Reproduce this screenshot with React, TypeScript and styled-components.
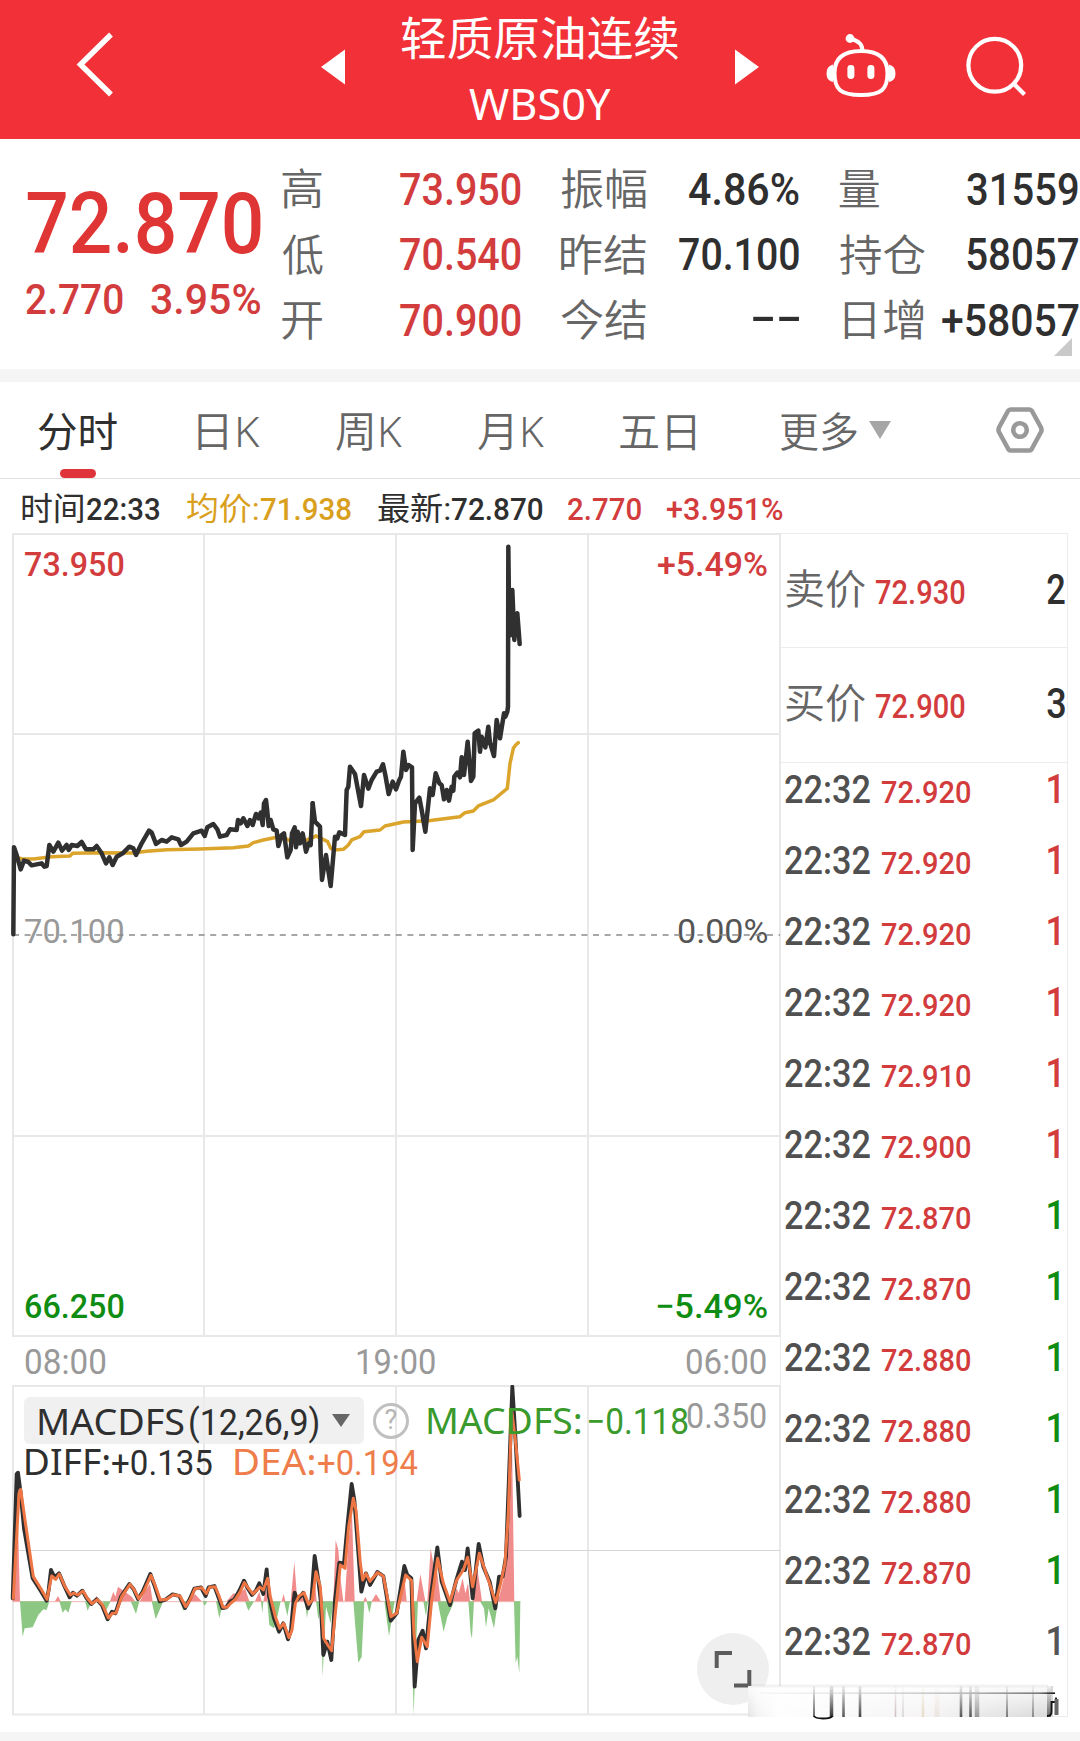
import React, { useLayoutEffect, useRef } from 'react';
import styled, { createGlobalStyle } from 'styled-components';

const RED = '#d33c3d';
const GREEN = '#0f8c12';
const INK = '#2f2f2f';
const SOFT = '#666666';
const MUTED = '#999999';
const GRID = '#e8e8e8';

const NUM = `Roboto, 'Noto Sans CJK SC', sans-serif`;
const LATIN = `'Noto Sans', 'Noto Sans CJK SC', sans-serif`;

const GlobalStyle = createGlobalStyle`
  * { box-sizing: border-box; }
  body { margin: 0; background: #fff; }
  svg { display: block; flex: none; }
`;

/* ---------- text that fills a given ink width ---------- */

interface LabelStyle {
  $w: number;
  $size: number;
  $color?: string;
  $weight?: number;
  $font?: string;
  $ml?: number;
  $lift?: number;
}

const LabelBox = styled.span<LabelStyle>`
  flex: none;
  display: inline-block;
  width: ${p => p.$w}px;
  margin-left: ${p => p.$ml ?? 0}px;
  margin-bottom: ${p => p.$lift ?? 0}px;
  font-family: ${p => p.$font ?? NUM};
  font-size: ${p => p.$size}px;
  font-weight: ${p => p.$weight ?? 500};
  line-height: 1.2;
  color: ${p => p.$color ?? INK};
  white-space: pre;
`;

const LabelInk = styled.span`
  display: inline-block;
  transform-origin: 0 50%;
`;

interface LabelProps {
  w: number;
  size: number;
  color?: string;
  weight?: number;
  font?: string;
  ml?: number;
  lift?: number;
  children: string;
}

function Label({ w, size, color, weight, font, ml, lift, children }: LabelProps) {
  const ref = useRef<HTMLSpanElement>(null);
  useLayoutEffect(() => {
    const el = ref.current;
    const ctx = document.createElement('canvas').getContext('2d');
    if (!el || !ctx) return;
    const cs = getComputedStyle(el);
    ctx.font = `${cs.fontWeight} ${cs.fontSize} ${cs.fontFamily}`;
    const m = ctx.measureText(children);
    const k = w / (m.actualBoundingBoxLeft + m.actualBoundingBoxRight);
    el.style.transform = `translateX(${m.actualBoundingBoxLeft * k}px) scaleX(${k})`;
  }, [w, children]);
  return (
    <LabelBox $w={w} $size={size} $color={color} $weight={weight} $font={font} $ml={ml} $lift={lift}>
      <LabelInk ref={ref}>{children}</LabelInk>
    </LabelBox>
  );
}

/* ---------- page ---------- */

const Page = styled.div`
  position: relative;
  width: 1080px;
  height: 1741px;
  overflow: hidden;
  background: #fff;
`;

const Header = styled.header`
  display: flex;
  height: 139px;
  padding-left: 72px;
  background: #f13038;
`;

const Icon = styled.svg<{ $ml?: number; $lift?: number }>`
  margin-left: ${p => p.$ml ?? 0}px;
  margin-bottom: ${p => p.$lift ?? 0}px;
`;

const Titles = styled.div`
  display: flex;
  flex-direction: column;
  width: 278px;
  margin: 0 56px;
  padding-top: 14px;
`;

const TitleLine = styled.div<{ $h: number }>`
  display: flex;
  align-items: center;
  justify-content: center;
  height: ${p => p.$h}px;
`;

const Quote = styled.section`
  position: relative;
  display: flex;
  height: 230px;
  padding-left: 26px;
`;

const LastPrice = styled.div`
  width: 256px;
  padding-top: 40px;
`;

const Line = styled.div<{ $h: number }>`
  display: flex;
  align-items: center;
  height: ${p => p.$h}px;
`;

const Stats = styled.div`
  display: flex;
  gap: 40.3px;
  padding-top: 18.5px;
`;

const StatColumn = styled.div`
  width: 238.6px;
`;

const StatRow = styled.div`
  display: flex;
  align-items: center;
  justify-content: space-between;
  height: 65.6px;
`;

const Corner = styled.i`
  position: absolute;
  right: 8px;
  bottom: 13px;
  border-left: 18px solid transparent;
  border-bottom: 18px solid #c9c9c9;
`;

const Band = styled.div<{ $h: number }>`
  height: ${p => p.$h}px;
  background: #f5f5f5;
`;

const Tabs = styled.nav`
  position: relative;
  display: flex;
  align-items: center;
  height: 97px;
  padding: 7px 0 0 38px;
  border-bottom: 1px solid #e2e2e2;
`;

const ActiveMark = styled.i`
  position: absolute;
  left: 60px;
  bottom: 0;
  width: 36px;
  height: 9px;
  border-radius: 5px;
  background: #df343a;
`;

const Summary = styled.div`
  display: flex;
  align-items: center;
  height: 54px;
  padding: 6px 0 0 22.4px;
`;

const Body = styled.main`
  display: flex;
  height: 1199px;
`;

const Charts = styled.section`
  width: 780px;
`;

const PriceChart = styled.div`
  position: relative;
  display: flex;
  flex-direction: column;
  justify-content: space-between;
  height: 804px;
  padding: 10px 13px 10px 25px;
`;

const Canvas = styled.svg`
  position: absolute;
  inset: 0;
`;

const Scale = styled.div`
  position: relative;
  display: flex;
  align-items: center;
  justify-content: space-between;
  height: 42px;
`;

const TimeAxis = styled.div`
  display: flex;
  align-items: center;
  justify-content: space-between;
  height: 48px;
  padding: 3px 14px 0 25px;
`;

const MacdChart = styled.div`
  position: relative;
  height: 331px;
  padding: 12px 0 0 24px;
`;

const MacdHead = styled.div`
  position: relative;
  display: flex;
  align-items: center;
  height: 47px;
`;

const MacdValues = styled.div`
  position: relative;
  display: flex;
  align-items: baseline;
  height: 44px;
  padding: 0 0 0 2px;
  margin-top: -4px;
`;

const Picker = styled.div`
  display: flex;
  align-items: baseline;
  width: 340px;
  height: 47px;
  padding: 2.5px 0 0 14.5px;
  border-radius: 6px;
  background: rgba(236, 236, 236, 0.8);
`;

const Caret = styled.i<{ $w: number; $h: number; $color: string; $ml: number; $lift?: number }>`
  align-self: center;
  width: 0;
  height: 0;
  margin-left: ${p => p.$ml}px;
  margin-bottom: ${p => p.$lift ?? 0}px;
  border: solid transparent;
  border-width: ${p => p.$h}px ${p => p.$w / 2}px 0;
  border-top-color: ${p => p.$color};
`;

const Help = styled.span`
  display: flex;
  align-items: center;
  justify-content: center;
  width: 36px;
  height: 36px;
  margin-left: 9px;
  border: 3px solid #c0c0c0;
  border-radius: 50%;
  font: 400 27px/1 ${NUM};
  color: #b5b5b5;
`;

const Expand = styled.button`
  position: absolute;
  left: 697px;
  bottom: 11px;
  width: 72px;
  height: 72px;
  padding: 0;
  border: 0;
  border-radius: 50%;
  background: #efefef;
`;

const Book = styled.aside`
  width: 287.5px;
  height: 1184px;
  border: 1.5px solid #ececec;
  border-left-width: 1px;
  overflow: hidden;
`;

const BookRow = styled.div`
  display: flex;
  align-items: baseline;
  height: 114.3px;
  padding: 31px 0 0 4.5px;
  border-bottom: 1.5px solid #ececec;
`;

const TradeRow = styled.div`
  display: flex;
  align-items: baseline;
  height: 71px;
  padding: 1.7px 0 0 4px;
`;

const Smear = styled.svg`
  position: absolute;
  left: 745px;
  top: 1682px;
`;

/* ---------- data ---------- */

const trades: [string, string][] = [
  ['72.920', RED], ['72.920', RED], ['72.920', RED], ['72.920', RED], ['72.910', RED], ['72.900', RED],
  ['72.870', GREEN], ['72.870', GREEN], ['72.880', GREEN], ['72.880', GREEN], ['72.880', GREEN],
  ['72.870', GREEN], ['72.870', '#555'],
];

const PRICE_A = 'M40,583 L42,322 50,345 62,388 72,362 85,366 95,376 125,370 133,380 140,378 148,315 160,335 175,308 186,332 200,315 206,330 215,315 232,318 245,306 258,328 280,328 290,318 305,340 318,370 328,352 338,375 350,350 368,340 388,320 400,325 408,345 425,310 447,272 455,278 468,312 485,300 500,305 515,292 535,298 543,315 560,305 580,280 605,272 614,288 622,262 640,252 652,268 660,290 680,285 690,268 710,270 714,240 722,250 730,235 742,258 750,240 758,255 768,222 776,235 782,218 788,255 792,190 798,180 802,215 806,258 812,240 820,268 830,272 835,318 845,285 852,280 862,352 872,330 876,280 884,262 888,322 893,275 900,310 908,280 918,335 926,310 932,315 938,190';
const PRICE_B = 'M38,850 L45,905 60,920 62,1000 66,1080 78,1005 92,1098 105,950 112,955 118,937 135,945 140,810 145,800 150,740 165,762 172,800 183,858 192,765 205,806 215,780 230,755 240,752 249,733 256,765 266,822 278,785 288,808 298,780 303,770 310,695 318,750 326,735 336,742 338,990 345,850 358,833 365,870 376,935 390,805 398,825 407,760 418,790 425,795 432,838 440,810 447,842 455,800 460,812 463,770 472,758 480,772 485,712 492,765 503,665 508,720 513,783 520,770 524,640 535,632 540,695 545,650 556,682 565,620 570,668 582,708 590,600 600,655 612,580 616,590 622,575 624,560 625,80 628,340 633,345 637,210 643,360 648,290 652,280 659,372';
const AVG_A = 'M45,352 L65,356 100,357 155,350 210,348 218,340 300,338 400,339 440,334 500,329 600,327 700,323 745,318 760,308 790,300 830,292 860,297 875,305 920,300 940,292 948,288';
const AVG_B = 'M48,948 L83,965 92,985 105,990 130,988 145,975 155,960 180,950 192,935 240,930 255,918 310,906 385,902 480,890 495,878 520,873 535,858 580,840 622,805 630,730 640,685 647,675 655,668';

const DIFF_LINE = 'M38,955 L50,582 54,578 62,640 72,745 98,895 122,932 140,962 146,930 153,870 164,892 177,880 193,918 209,952 219,938 231,947 247,932 260,955 274,972 290,958 306,976 323,1018 336,995 346,1000 363,950 388,912 401,928 414,957 428,935 451,882 463,915 479,964 498,958 518,943 538,948 555,984 568,960 583,926 603,922 617,948 626,922 643,918 653,945 667,984 679,982 690,965 703,958 719,930 732,902 743,925 756,945 768,932 778,910 790,942 800,868 807,950 822,1015 837,1055 850,1030 864,1078 873,1050 880,970 884,938 892,960 910,938 924,985 934,962 944,828 955,900 962,960 970,1125 982,1085 994,1140 1005,960 1018,848 1032,850 1042,740 1055,612 1063,660 1084,935 1098,880 1110,915 1132,876 1150,888 1172,1022 1190,1000 1213,858 1222,885 1234,895 1244,1220 1255,1080 1268,1052 1278,1105 1294,940 1312,802 1325,905 1350,975 1369,900 1386,845 1395,870 1403,805 1418,955 1436,792 1450,860 1469,905 1486,985 1497,890 1508,890 1518,830 1537,320 1545,450 1559,708';
const DEA_LINE = 'M40,955 L57,640 62,628 75,720 100,890 122,925 141,958 155,888 167,898 178,882 195,920 211,945 221,939 233,945 249,933 262,955 276,971 292,959 308,975 325,1014 337,1000 348,999 365,950 390,913 402,928 416,956 431,935 453,886 465,915 481,960 500,958 520,944 540,948 557,980 570,960 585,926 605,923 619,941 629,922 645,920 656,945 669,982 681,982 692,970 706,958 721,935 733,908 746,926 759,942 769,932 780,921 790,930 803,895 811,950 826,1010 839,1045 851,1030 867,1073 876,1050 886,970 897,948 912,938 926,973 937,960 948,875 961,920 971,1075 982,1093 995,1112 1010,960 1021,855 1035,865 1046,740 1060,655 1068,690 1081,850 1088,900 1098,881 1110,904 1132,878 1150,888 1160,940 1173,1010 1190,1000 1205,935 1217,885 1235,902 1242,1060 1252,1145 1265,1072 1282,1100 1295,960 1313,835 1330,910 1350,965 1370,900 1390,870 1403,832 1418,920 1438,820 1460,885 1475,930 1487,968 1502,910 1515,850 1525,700 1535,390 1545,470 1558,600';
const BARS_UP = 'M38,964 L53,690 60,964Z M165,964 L174,948 182,964Z M278,964 L290,948 300,964Z M330,964 L340,935 346,950 354,920 375,935 395,950 405,964Z M420,964 L437,930 450,912 458,964Z M568,964 L585,942 605,964Z M680,964 L700,940 715,945 735,925 748,964Z M765,964 L778,935 785,964Z M790,964 L798,925 803,964Z M845,964 L851,942 856,964Z M872,964 L883,845 892,964Z M898,964 L906,940 915,964Z M936,964 L943,880 950,964Z M1000,964 L1007,780 1015,810 1022,900 1030,964Z M1034,964 L1046,780 1056,700 1064,964Z M1090,964 L1096,950 1102,964Z M1115,964 L1128,942 1142,964Z M1193,964 L1200,915 1206,940 1214,900 1220,964Z M1250,964 L1261,882 1276,964Z M1282,964 L1292,805 1300,850 1312,880 1322,964Z M1358,964 L1370,925 1376,940 1388,895 1396,940 1404,910 1410,964Z M1418,964 L1432,865 1446,964Z M1493,964 L1503,930 1515,880 1530,500 1536,480 1543,964Z';
const BARS_DOWN = 'M60,964 L68,1070 74,1045 98,1042 115,1005 130,988 140,990 148,964Z M178,964 L188,998 196,988 205,998 215,964Z M255,964 L263,992 275,964Z M308,964 L318,992 332,964Z M392,964 L408,1002 418,964Z M455,964 L467,1018 490,964Z M540,964 L550,992 562,964Z M608,964 L614,978 622,964Z M648,964 L658,1015 670,964Z M735,964 L745,992 762,964Z M783,964 L787,1000 790,964Z M802,964 L808,1035 822,1045 832,1010 842,964Z M852,964 L862,1008 870,964Z M915,964 L921,1015 928,964Z M948,964 L955,1018 963,985 968,1190 978,980 992,1030 1000,964Z M1060,964 L1066,1040 1075,1148 1085,1130 1093,964Z M1100,964 L1108,1000 1116,964Z M1153,964 L1167,1068 1184,964Z M1230,964 L1237,1130 1241,1305 1247,1130 1254,964Z M1270,964 L1278,1008 1284,964Z M1313,964 L1324,1020 1331,1055 1342,1010 1354,985 1362,964Z M1405,964 L1412,1060 1416,1075 1422,964Z M1440,964 L1452,985 1458,1042 1466,985 1482,1045 1494,964Z M1542,964 L1547,1150 1552,1130 1558,1180 1561,964Z';

/* ---------- parts ---------- */

function TopBar() {
  return (
    <Header>
      <Icon width="44" height="139" viewBox="72 0 44 139" fill="none" stroke="#fff" strokeWidth="5.5">
        <path d="M111 34.5 80.5 64.5 111 94.5" />
      </Icon>
      <Icon $ml={205} width="24" height="139" viewBox="321 0 24 139">
        <path d="M345 49.5V84.5L321 67Z" fill="#fff" />
      </Icon>
      <Titles>
        <TitleLine $h={52}><Label w={278} size={46} color="#fff" weight={400}>轻质原油连续</Label></TitleLine>
        <TitleLine $h={74}><Label w={141.5} size={44} color="#fff" weight={400} font={LATIN} lift={-2}>WBS0Y</Label></TitleLine>
      </Titles>
      <Icon width="24" height="139" viewBox="735 0 24 139">
        <path d="M735 49.5V84.5L759 67Z" fill="#fff" />
      </Icon>
      <Icon $ml={65} width="74" height="139" viewBox="824 0 74 139" fill="none" stroke="#fff" strokeWidth="4">
        <path d="M861 51C879 51 887.5 59 887.5 73C887.5 89 882 95 861 95C840 95 834.5 89 834.5 73C834.5 59 843 51 861 51Z" />
        <path d="M862.5 51C862.5 44 858 40.5 851 39" />
        <circle cx="850" cy="38.5" r="4.4" fill="#fff" stroke="none" />
        <path d="M833 64.5Q826.5 66 826.5 73.5T833 82ZM889 64.5Q895.5 66 895.5 73.5T889 82Z" fill="#fff" stroke="none" />
        <rect x="847.4" y="65" width="7" height="14" rx="3.4" fill="#fff" stroke="none" />
        <rect x="867.4" y="65" width="7" height="14" rx="3.4" fill="#fff" stroke="none" />
      </Icon>
      <Icon $ml={66} width="66" height="139" viewBox="964 0 66 139" fill="none" stroke="#fff" strokeWidth="4.2">
        <circle cx="994.8" cy="65.3" r="26.4" />
        <path d="M1014.5 84.5 1024.5 94.5" />
      </Icon>
    </Header>
  );
}

function Stat({ name, nw, value, vw, red, inset, lift }: { name: string; nw: number; value: string; vw: number; red?: boolean; inset?: number; lift?: number }) {
  return (
    <StatRow>
      <Label w={nw} size={43} color={SOFT} weight={350} ml={inset} lift={-1}>{name}</Label>
      <Label w={vw} size={43.5} color={red ? RED : INK} lift={lift ?? -1}>{value}</Label>
    </StatRow>
  );
}

function QuotePanel() {
  return (
    <Quote>
      <LastPrice>
        <Line $h={90}><Label w={234} size={86} color="#e03535" ml={1} lift={1}>72.870</Label></Line>
        <Line $h={60}>
          <Label w={97} size={43} color={RED} lift={-1}>2.770</Label>
          <Label w={109} size={43} color={RED} ml={28} lift={-1}>3.95%</Label>
        </Line>
      </LastPrice>
      <Stats>
        <StatColumn>
          <Stat name="高" nw={40} value="73.950" vw={120.6} red />
          <Stat name="低" nw={41} value="70.540" vw={120.6} red />
          <Stat name="开" nw={40} value="70.900" vw={120.6} red />
        </StatColumn>
        <StatColumn>
          <Stat name="振幅" nw={85} value="4.86%" vw={110} />
          <Stat name="昨结" nw={85} value="70.100" vw={120} />
          <Stat name="今结" nw={85} value="--" vw={47} lift={7} />
        </StatColumn>
        <StatColumn>
          <Stat name="量" nw={40} value="31559" vw={111} />
          <Stat name="持仓" nw={85} value="58057" vw={111} />
          <Stat name="日增" nw={79} value="+58057" vw={136.5} inset={4.5} />
        </StatColumn>
      </Stats>
      <Corner />
    </Quote>
  );
}

function TabBar() {
  return (
    <Tabs>
      <Label w={79.2} size={41} color={INK} weight={400} lift={-1}>分时</Label>
      <Label w={61.7} size={42} color={SOFT} weight={350} font={LATIN} ml={81.2} lift={4}>日K</Label>
      <Label w={65.8} size={42} color={SOFT} weight={350} font={LATIN} ml={75.7} lift={4}>周K</Label>
      <Label w={66} size={42} color={SOFT} weight={350} font={LATIN} ml={76} lift={4}>月K</Label>
      <Label w={75} size={41} color={SOFT} weight={350} ml={76}>五日</Label>
      <Label w={77} size={41} color={SOFT} weight={350} ml={85}>更多</Label>
      <Caret $w={22} $h={18} $color="#a6a6a6" $ml={12} $lift={7} />
      <Icon $ml={104} $lift={7} width="50" height="50" viewBox="995 405 50 50" fill="none" stroke="#999" strokeWidth="4.6" strokeLinejoin="round">
        <path d="M1010.5 409.5H1029.5Q1031 409.5 1032 411L1041 427.5Q1042 430 1041 432L1032 448.5Q1031 450.5 1029.5 450.5H1010.5Q1009 450.5 1008 448.5L999 432Q998 430 999 427.5L1008 411Q1009 409.5 1010.5 409.5Z" />
        <circle cx="1020" cy="430" r="6.8" />
      </Icon>
      <ActiveMark />
    </Tabs>
  );
}

function PricePanel() {
  return (
    <PriceChart>
      <Canvas width="782" height="804" viewBox="0 533 782 804" fill="none">
        <g stroke={GRID} strokeWidth="2">
          <path d="M13 534H780V1336H13ZM204 534V1336M396 534V1336M588 534V1336M13 734H780M13 1136H780" />
        </g>
      </Canvas>
      <Scale>
        <Label w={98.5} size={34} color={RED}>73.950</Label>
        <Label w={109} size={34} color={RED}>+5.49%</Label>
      </Scale>
      <Scale>
        <Label w={98.5} size={34} color={MUTED} weight={400} lift={8}>70.100</Label>
        <Label w={89.5} size={34} color="#555" weight={400} lift={8}>0.00%</Label>
      </Scale>
      <Scale>
        <Label w={98.5} size={34} color={GREEN}>66.250</Label>
        <Label w={110} size={34} color={GREEN}>−5.49%</Label>
      </Scale>
      <Canvas width="782" height="804" viewBox="0 533 782 804" fill="none">
        <path d="M13 935H780" stroke="#8a8a8a" strokeWidth="1.5" strokeDasharray="6 5.6" />
        <g strokeLinejoin="round" strokeLinecap="round">
          <g transform="translate(0 740) scale(.33333)">
            <path d={AVG_A} stroke="#dba42b" strokeWidth="10.5" />
            <path d={PRICE_A} stroke="#303030" strokeWidth="13.5" />
          </g>
          <g transform="translate(300 520) scale(.33333)">
            <path d={AVG_B} stroke="#dba42b" strokeWidth="10.5" />
            <path d={PRICE_B} stroke="#303030" strokeWidth="13.5" />
          </g>
        </g>
      </Canvas>
    </PriceChart>
  );
}

function MacdPanel() {
  const green = '#3a9a2c';
  const orange = '#ee7d4b';
  return (
    <MacdChart>
      <Canvas width="782" height="331" viewBox="0 1385 782 331" fill="none">
        <path d="M13 1386H780V1714.5H13ZM204 1386V1714M396 1386V1714M588 1386V1714" stroke={GRID} strokeWidth="2" />
        <path d="M13 1550.5H780" stroke="#d6d6d6" strokeWidth="1.2" />
        <g transform="translate(0 1280) scale(.33333)" strokeLinejoin="round" strokeLinecap="round">
          <path d="M38 965H1560" stroke="#f2b5b0" strokeWidth="3" />
          <path d={BARS_DOWN} fill="#8cc884" />
          <path d={BARS_UP} fill="#f08c8c" />
          <path d={DIFF_LINE} stroke="#2f2f2f" strokeWidth="11.5" />
          <path d={DEA_LINE} stroke="#ee7544" strokeWidth="9" />
        </g>
      </Canvas>
      <MacdHead>
        <Picker>
          <Label w={145} size={36.5} weight={400} font={LATIN}>MACDFS</Label>
          <Label w={128} size={36} weight={400} ml={6}>(12,26,9)</Label>
          <Caret $w={19} $h={13} $color="#666" $ml={14} $lift={3} />
        </Picker>
        <Help>?</Help>
        <Label w={153} size={36.5} color={green} weight={400} font={LATIN} ml={19} lift={-1}>MACDFS:</Label>
        <Label w={100} size={36} color={green} ml={7} weight={400} lift={-5}>−0.118</Label>
        <Label w={79} size={34.5} color={MUTED} weight={400} ml={-1} lift={8}>0.350</Label>
      </MacdHead>
      <MacdValues>
        <Label w={82.5} size={35.5} weight={400} font={LATIN}>DIFF:</Label>
        <Label w={100} size={35.5} weight={400} ml={3.5}>+0.135</Label>
        <Label w={79} size={35.5} color={orange} weight={400} font={LATIN} ml={22.5}>DEA:</Label>
        <Label w={100} size={35.5} color={orange} weight={400} ml={4.5}>+0.194</Label>
      </MacdValues>
      <Expand aria-label="expand">
        <svg width="72" height="72" viewBox="697 1633 72 72" fill="none" stroke="#5c5c5c" strokeWidth="4">
          <path d="M716.7 1668V1653H732M749.3 1670V1685.5H734" />
        </svg>
      </Expand>
    </MacdChart>
  );
}

function OrderBook() {
  return (
    <Book>
      <BookRow>
        <Label w={79.2} size={41} color={SOFT} weight={350}>卖价</Label>
        <Label w={89} size={33} color={RED} ml={11}>72.930</Label>
        <Label w={18} size={42} ml={82.3}>2</Label>
      </BookRow>
      <BookRow>
        <Label w={79.2} size={41} color={SOFT} weight={350}>买价</Label>
        <Label w={89} size={33} color={RED} ml={11}>72.900</Label>
        <Label w={18} size={42} ml={82.3}>3</Label>
      </BookRow>
      {trades.map(([price, color], i) => (
        <TradeRow key={i}>
          <Label w={85.4} size={38} color="#505050">22:32</Label>
          <Label w={88.5} size={32} color={RED} ml={12}>{price}</Label>
          <Label w={11} size={41.5} color={color} ml={77}>1</Label>
        </TradeRow>
      ))}
    </Book>
  );
}

const STREAKS: [number, number, string][] = [
  [814, 1.8, '#555'], [831.5, 3.5, '#333'], [843.5, 2.6, '#555'], [860, 2.6, '#444'], [895.5, 1.5, '#cdbdbd'],
  [903, 1.5, '#cfcfcf'], [923, 2.5, '#e5dcc8'], [937, 5, '#ebe4e0'], [961, 2.6, '#555'], [970.5, 2.6, '#555'],
  [977, 4.5, '#999'], [1007, 2, '#777'], [1033, 2, '#888'], [1049, 4, '#666'],
];

function SmearedEdge() {
  return (
    <Smear width="315" height="40" viewBox="745 1682 315 40">
      <defs>
        <linearGradient id="fade" x1="0" y1="0" x2="0" y2="1">
          <stop offset="0" stopColor="#fff" stopOpacity="0.9" />
          <stop offset="1" stopColor="#fff" stopOpacity="0" />
        </linearGradient>
        <linearGradient id="wash" x1="0" y1="0" x2="1" y2="0">
          <stop offset="0" stopColor="#e2e2e2" />
          <stop offset="0.03" stopColor="#f4f4f4" />
          <stop offset="0.1" stopColor="#fefefe" />
          <stop offset="0.6" stopColor="#f5f3f3" />
          <stop offset="1" stopColor="#d8d8d8" />
        </linearGradient>
        <linearGradient id="rule" x1="0" y1="0" x2="1" y2="0">
          <stop offset="0" stopColor="#ddd" stopOpacity="0.2" />
          <stop offset="0.7" stopColor="#bbb" />
          <stop offset="0.95" stopColor="#777" />
          <stop offset="1" stopColor="#111" />
        </linearGradient>
      </defs>
      <rect x="748" y="1686" width="305" height="31" fill="url(#wash)" />
      {STREAKS.map(([x, w, c]) => <rect key={x} x={x - w / 2} y="1686" width={w} height="31" fill={c} />)}
      <rect x="748" y="1686" width="303" height="31" fill="url(#fade)" />
      <rect x="748" y="1684.5" width="300" height="3" fill="#999" opacity="0.12" />
      <rect x="760" y="1692.4" width="295" height="1.6" fill="url(#rule)" />
      <path d="M814 1716Q815 1718.5 823 1718.5T832.5 1716" fill="none" stroke="#111" strokeWidth="1.8" />
      <path d="M1047 1716Q1051.5 1716 1051.5 1712V1702H1056V1697.5" fill="none" stroke="#111" strokeWidth="1.8" />
      <rect x="1054.5" y="1699" width="4" height="16" fill="#666" />
    </Smear>
  );
}

export default function App() {
  return (
    <Page>
      <GlobalStyle />
      <TopBar />
      <QuotePanel />
      <Band $h={13} />
      <TabBar />
      <Summary>
        <Label w={61} size={31.5} weight={400} lift={-2}>时间</Label>
        <Label w={72.5} size={32} ml={4}>22:33</Label>
        <Label w={71} size={31.5} color="#d9a01e" weight={400} ml={27} lift={-2}>均价:</Label>
        <Label w={90} size={32} color="#d9a01e" ml={3}>71.938</Label>
        <Label w={71.6} size={31.5} weight={400} ml={27} lift={-2}>最新:</Label>
        <Label w={90.5} size={32} ml={3}>72.870</Label>
        <Label w={73} size={32} color={RED} ml={25.5}>2.770</Label>
        <Label w={116} size={32} color={RED} ml={26}>+3.951%</Label>
      </Summary>
      <Body>
        <Charts>
          <PricePanel />
          <TimeAxis>
            <Label w={80.5} size={34.5} color={MUTED} weight={400}>08:00</Label>
            <Label w={78} size={34.5} color={MUTED} weight={400} ml={1}>19:00</Label>
            <Label w={80} size={34.5} color={MUTED} weight={400}>06:00</Label>
          </TimeAxis>
          <MacdPanel />
        </Charts>
        <OrderBook />
      </Body>
      <Band $h={10} />
      <SmearedEdge />
    </Page>
  );
}
